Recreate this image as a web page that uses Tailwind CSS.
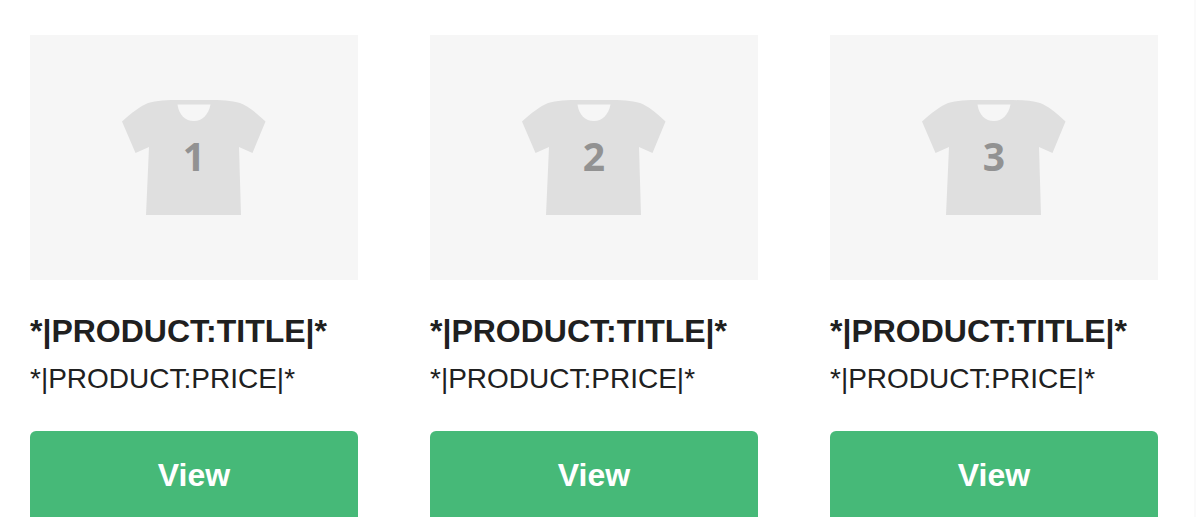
<!DOCTYPE html>
<html lang="en">
<head>
<meta charset="utf-8">
<title>Product recommendations</title>
<script src="https://cdn.jsdelivr.net/npm/@tailwindcss/browser@4"></script>
</head>
<body class="bg-white font-['Helvetica','Liberation_Sans',sans-serif] text-[#202020]">
<svg class="hidden">
  <symbol id="shirt" viewBox="0 0 328 245">
    <path fill="#dfdfdf" d="M92 86.500C102 77.500 110 71.500 118 68C126 65.500 138 65 150 65H178C190 65 202 65.500 210 68C218 71 226 77.500 235.500 86.500L222.500 118L209 112L211 180H116L119 112L105.500 118Z"/>
    <path fill="#f6f6f6" d="M147.500 69.500H180.500C178.500 80 172 86 164 86C155 86 149 80 147.500 69.500Z"/>
  </symbol>
</svg>
<main class="grid h-screen grid-cols-3 gap-[72px] overflow-hidden border-r-2 border-[#fafafa] pt-[35px] pr-9 pl-[30px]">
  <article class="flex flex-col">
    <svg class="w-full bg-[#f6f6f6]" viewBox="0 0 328 245" role="img" aria-label="Product 1">
      <use href="#shirt"/>
      <text x="164" y="136" text-anchor="middle" class="fill-[#929292] font-['Open_Sans',sans-serif] text-[39px] font-bold">1</text>
    </svg>
    <h2 class="mt-[33px] text-[32px] leading-9 font-bold">*|PRODUCT:TITLE|*</h2>
    <p class="mt-3 text-[28px] leading-9">*|PRODUCT:PRICE|*</p>
    <button type="button" class="mt-[34px] h-24 w-full shrink-0 rounded-md bg-[#46b978] pb-2 text-[32px] font-bold text-white">View</button>
  </article>
  <article class="flex flex-col">
    <svg class="w-full bg-[#f6f6f6]" viewBox="0 0 328 245" role="img" aria-label="Product 2">
      <use href="#shirt"/>
      <text x="164" y="136" text-anchor="middle" class="fill-[#929292] font-['Open_Sans',sans-serif] text-[39px] font-bold">2</text>
    </svg>
    <h2 class="mt-[33px] text-[32px] leading-9 font-bold">*|PRODUCT:TITLE|*</h2>
    <p class="mt-3 text-[28px] leading-9">*|PRODUCT:PRICE|*</p>
    <button type="button" class="mt-[34px] h-24 w-full shrink-0 rounded-md bg-[#46b978] pb-2 text-[32px] font-bold text-white">View</button>
  </article>
  <article class="flex flex-col">
    <svg class="w-full bg-[#f6f6f6]" viewBox="0 0 328 245" role="img" aria-label="Product 3">
      <use href="#shirt"/>
      <text x="164" y="136" text-anchor="middle" class="fill-[#929292] font-['Open_Sans',sans-serif] text-[39px] font-bold">3</text>
    </svg>
    <h2 class="mt-[33px] text-[32px] leading-9 font-bold">*|PRODUCT:TITLE|*</h2>
    <p class="mt-3 text-[28px] leading-9">*|PRODUCT:PRICE|*</p>
    <button type="button" class="mt-[34px] h-24 w-full shrink-0 rounded-md bg-[#46b978] pb-2 text-[32px] font-bold text-white">View</button>
  </article>
</main>
</body>
</html>
